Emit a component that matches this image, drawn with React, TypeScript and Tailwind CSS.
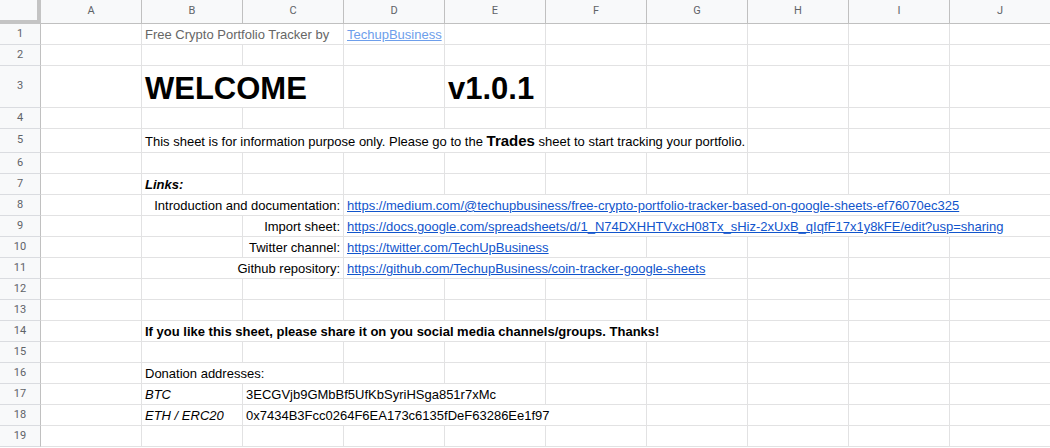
import type { ReactNode } from "react";

const COLUMNS = ["A", "B", "C", "D", "E", "F", "G", "H", "I", "J"];

// col-span classes spelled out so the stylesheet picks them up
const SPAN: Record<number, string> = {
  1: "",
  2: "col-span-2",
  3: "col-span-3",
  4: "col-span-4",
  5: "col-span-5",
  6: "col-span-6",
  7: "col-span-7",
};

type Cell = { at: number; span?: number; right?: boolean; node: ReactNode };
type Row = { n: number; height?: string; pad?: string; cells?: Cell[] };

const Link = ({ href, label, light }: { href: string; label?: string; light?: boolean }) => (
  <a href={href} className={light ? "text-[#6d9eeb] underline" : "text-[#1155cc] underline"}>
    {label ?? href}
  </a>
);

const ROWS: Row[] = [
  {
    n: 1,
    cells: [
      { at: 1, span: 2, node: <span className="text-[#666666]">Free Crypto Portfolio Tracker by</span> },
      { at: 3, node: <Link href="https://medium.com/@techupbusiness" label="TechupBusiness" light /> },
    ],
  },
  { n: 2 },
  {
    n: 3,
    height: "h-[42px]",
    pad: "pb-0",
    cells: [
      { at: 1, span: 2, node: <span className="text-[31px] leading-[36px] font-bold">WELCOME</span> },
      { at: 4, node: <span className="text-[31px] leading-[36px] font-bold">v1.0.1</span> },
    ],
  },
  { n: 4 },
  {
    n: 5,
    height: "h-[24px]",
    pad: "pb-[2px]",
    cells: [
      {
        at: 1,
        span: 6,
        node: (
          <span>
            This sheet is for information purpose only. Please go to the{" "}
            <b className="text-[15px]">Trades</b> sheet to start tracking your portfolio.
          </span>
        ),
      },
    ],
  },
  { n: 6 },
  { n: 7, cells: [{ at: 1, node: <b className="italic">Links:</b> }] },
  {
    n: 8,
    cells: [
      { at: 1, span: 2, right: true, node: "Introduction and documentation:" },
      {
        at: 3,
        span: 7,
        node: <Link href="https://medium.com/@techupbusiness/free-crypto-portfolio-tracker-based-on-google-sheets-ef76070ec325" />,
      },
    ],
  },
  {
    n: 9,
    cells: [
      { at: 2, right: true, node: "Import sheet:" },
      {
        at: 3,
        span: 7,
        node: <Link href="https://docs.google.com/spreadsheets/d/1_N74DXHHTVxcH08Tx_sHiz-2xUxB_qIqfF17x1y8kFE/edit?usp=sharing" />,
      },
    ],
  },
  {
    n: 10,
    cells: [
      { at: 2, right: true, node: "Twitter channel:" },
      { at: 3, span: 3, node: <Link href="https://twitter.com/TechUpBusiness" /> },
    ],
  },
  {
    n: 11,
    cells: [
      { at: 1, span: 2, right: true, node: "Github repository:" },
      { at: 3, span: 4, node: <Link href="https://github.com/TechupBusiness/coin-tracker-google-sheets" /> },
    ],
  },
  { n: 12 },
  { n: 13 },
  {
    n: 14,
    cells: [
      {
        at: 1,
        span: 6,
        node: <b>If you like this sheet, please share it on you social media channels/groups. Thanks!</b>,
      },
    ],
  },
  { n: 15 },
  { n: 16, cells: [{ at: 1, span: 2, node: "Donation addresses:" }] },
  {
    n: 17,
    cells: [
      { at: 1, node: <i>BTC</i> },
      { at: 2, span: 3, node: "3ECGVjb9GMbBf5UfKbSyriHSga851r7xMc" },
    ],
  },
  {
    n: 18,
    cells: [
      { at: 1, node: <i>ETH / ERC20</i> },
      { at: 2, span: 4, node: "0x7434B3Fcc0264F6EA173c6135fDeF63286Ee1f97" },
    ],
  },
  { n: 19 },
];

const grid = "grid grid-cols-[41px_repeat(10,101px)]";

function SheetRow({ row }: { row: Row }) {
  const height = row.height ?? "h-[21px]";
  const pad = row.pad ?? "pb-[1px]";
  const out: ReactNode[] = [];

  for (let c = 0; c < COLUMNS.length; ) {
    const cell = row.cells?.find((x) => x.at === c);
    const span = cell?.span ?? 1;
    out.push(
      <div
        key={c}
        className={`${SPAN[span]} flex items-end overflow-hidden whitespace-nowrap border-r border-b border-[#e2e2e3] px-[3px] ${pad} ${
          cell?.right ? "justify-end" : ""
        }`}
      >
        {cell && <div className="leading-[16px]">{cell.node}</div>}
      </div>
    );
    c += span;
  }

  return (
    <div className={`${grid} ${height}`}>
      <div className="flex items-center justify-center border-r border-b border-r-[#c0c0c0] border-b-[#dadce0] bg-[#f8f9fa] font-['Roboto',sans-serif] text-[11px] text-[#5f6368]">
        {row.n}
      </div>
      {out}
    </div>
  );
}

export default function App() {
  return (
    <div className="h-[448px] w-[1050px] overflow-hidden bg-white font-['Liberation_Sans',Arial,sans-serif] text-[13px] text-black">
      <div className={`${grid} h-[24px] bg-[#f8f9fa]`}>
        <div className="border-r-4 border-b-4 border-[#c4c4c4]" />
        {COLUMNS.map((col) => (
          <div
            key={col}
            className="flex items-center justify-center border-r border-b border-[#c0c0c0] font-['Roboto',sans-serif] text-[11px] text-[#5f6368]"
          >
            {col}
          </div>
        ))}
      </div>
      {ROWS.map((row) => (
        <SheetRow key={row.n} row={row} />
      ))}
    </div>
  );
}
